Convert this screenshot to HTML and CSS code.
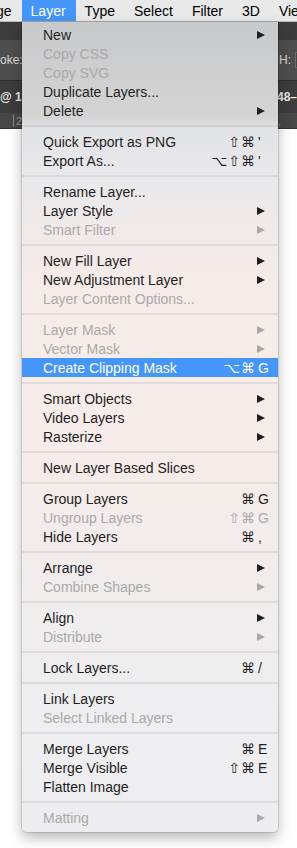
FILE: index.html
```html
<!DOCTYPE html>
<html lang="en">
<head>
  <meta charset="UTF-8">
  <title>Layer Menu</title>
  <link rel="stylesheet" href="styles.css">
</head>
<body>
  <div class="menubar">
    <span class="bar-item first">ge</span>
    <span class="bar-item open">Layer</span>
    <span class="bar-item">Type</span>
    <span class="bar-item">Select</span>
    <span class="bar-item">Filter</span>
    <span class="bar-item">3D</span>
    <span class="bar-item">View</span>
  </div>

  <div class="workspace">
    <div class="appbar"></div>
    <div class="options">
      <div class="side"><span class="opt-label">oke:</span><span class="field"></span></div>
      <div class="side"><span class="opt-label">H:</span><span class="field"><span class="num">0</span></span></div>
    </div>
    <div class="tabs">
      <span>@ 1(</span>
      <span>48–</span>
    </div>
    <div class="ruler">
      <span class="tick">2(</span>
      <span>0,</span>
    </div>
  </div>

  <div class="menu">
    <div class="item sub">New</div>
    <div class="item off">Copy CSS</div>
    <div class="item off">Copy SVG</div>
    <div class="item">Duplicate Layers...</div>
    <div class="item sub">Delete</div>
    <div class="sep"></div>
    <div class="item">Quick Export as PNG<span class="mods">⇧⌘</span><span class="key">'</span></div>
    <div class="item">Export As...<span class="mods">⌥⇧⌘</span><span class="key">'</span></div>
    <div class="sep"></div>
    <div class="item">Rename Layer...</div>
    <div class="item sub">Layer Style</div>
    <div class="item sub off">Smart Filter</div>
    <div class="sep"></div>
    <div class="item sub">New Fill Layer</div>
    <div class="item sub">New Adjustment Layer</div>
    <div class="item off">Layer Content Options...</div>
    <div class="sep"></div>
    <div class="item sub off">Layer Mask</div>
    <div class="item sub off">Vector Mask</div>
    <div class="item active">Create Clipping Mask<span class="mods">⌥⌘</span><span class="key">G</span></div>
    <div class="sep"></div>
    <div class="item sub">Smart Objects</div>
    <div class="item sub">Video Layers</div>
    <div class="item sub">Rasterize</div>
    <div class="sep"></div>
    <div class="item">New Layer Based Slices</div>
    <div class="sep"></div>
    <div class="item">Group Layers<span class="mods">⌘</span><span class="key">G</span></div>
    <div class="item off">Ungroup Layers<span class="mods">⇧⌘</span><span class="key">G</span></div>
    <div class="item">Hide Layers<span class="mods">⌘</span><span class="key">,</span></div>
    <div class="sep"></div>
    <div class="item sub">Arrange</div>
    <div class="item sub off">Combine Shapes</div>
    <div class="sep"></div>
    <div class="item sub">Align</div>
    <div class="item sub off">Distribute</div>
    <div class="sep"></div>
    <div class="item">Lock Layers...<span class="mods">⌘</span><span class="key">/</span></div>
    <div class="sep"></div>
    <div class="item">Link Layers</div>
    <div class="item off">Select Linked Layers</div>
    <div class="sep"></div>
    <div class="item">Merge Layers<span class="mods">⌘</span><span class="key">E</span></div>
    <div class="item">Merge Visible<span class="mods">⇧⌘</span><span class="key">E</span></div>
    <div class="item">Flatten Image</div>
    <div class="sep"></div>
    <div class="item sub off">Matting</div>
  </div>
</body>
</html>
```

FILE: styles.css
```css
body {
  margin: 0;
  background-color: #fff;
  font-family: "Liberation Sans", Arial, sans-serif;
  font-size: 14px;
  color: #1f1f1f;
  overflow: hidden;
}

/* top menu bar */
.menubar {
  display: flex;
  height: 22px;
  line-height: 22px;
  background-color: #e9e9e9;
  border-bottom: 1px solid #b9bcc0;
  box-sizing: border-box;
  white-space: nowrap;
  overflow: hidden;
  color: #000;
}
.bar-item {
  padding: 0 10px 0 9px;
}
.bar-item.first {
  padding: 0 10px 0 0;
  margin-left: -4px;
}
.bar-item.open {
  background-color: #4596f8;
  color: #fff;
}

/* photoshop panels behind the menu */
.workspace {
  color: #d8d8d8;
  font-size: 12px;
}
.appbar {
  height: 18px;
  background-color: #3c3c3c;
}
.options {
  display: flex;
  justify-content: space-between;
  align-items: center;
  height: 40px;
  background-color: #4e4e4e;
  border-bottom: 1px solid #2e2e2e;
}
.side {
  display: flex;
  align-items: center;
}
.opt-label {
  margin-right: 4px;
}
.options .side:last-child {
  width: 18px;
}
.field {
  display: inline-block;
  width: 20px;
  height: 16px;
  border: 1px solid #6a6a6a;
  background-color: #454545;
  box-sizing: border-box;
  color: #e8953a;
  line-height: 14px;
  padding-left: 2px;
}
.tabs {
  display: flex;
  justify-content: space-between;
  align-items: center;
  height: 32px;
  background-color: #3d3d3d;
  font-weight: bold;
  color: #e4e4e4;
}
.ruler {
  display: flex;
  justify-content: space-between;
  align-items: center;
  height: 15px;
  background-color: #474747;
  color: #9a9a9a;
  font-size: 11px;
  border-bottom: 1px solid #333;
  padding-left: 13px;
  padding-right: 16px;
}
.tick {
  border-left: 1px solid #8a8a8a;
  padding-left: 2px;
}

/* dropdown */
.menu {
  position: absolute;
  left: 22px;
  top: 22px;
  width: 256px;
  padding: 3px 0 5px;
  box-sizing: border-box;
  border-radius: 0 0 5px 5px;
  background: linear-gradient(to bottom,
    #c8c9ca 0,
    #d4d4d5 96px,
    #e2e3e6 106px,
    #e8e8eb 150px,
    #efe9e9 200px,
    #f5ebe8 260px,
    #f6ece9 420px,
    #f3ecea 520px,
    #efedee 600px,
    #ededf0 810px);
  box-shadow: 0 0 0 1px rgba(0,0,0,0.12), 0 6px 14px rgba(0,0,0,0.28);
}
.item {
  display: flex;
  align-items: center;
  height: 19px;
  padding: 0 8px 0 21px;
  white-space: nowrap;
}
.item.off {
  color: #a9a9a9;
}
.item.active {
  background-color: #4596f8;
  color: #fff;
}
.item.sub::after {
  content: "";
  margin-left: auto;
  margin-right: 5px;
  border-left: 8px solid currentColor;
  border-top: 4.5px solid transparent;
  border-bottom: 4.5px solid transparent;
}
.mods {
  margin-left: auto;
  margin-right: 2px;
  font-family: "DejaVu Sans", sans-serif;
  font-size: 14px;
  letter-spacing: 1px;
}
.key {
  width: 12px;
}
.sep {
  height: 2px;
  margin: 5px 0;
  background-color: rgba(0,0,0,0.07);
}
```
